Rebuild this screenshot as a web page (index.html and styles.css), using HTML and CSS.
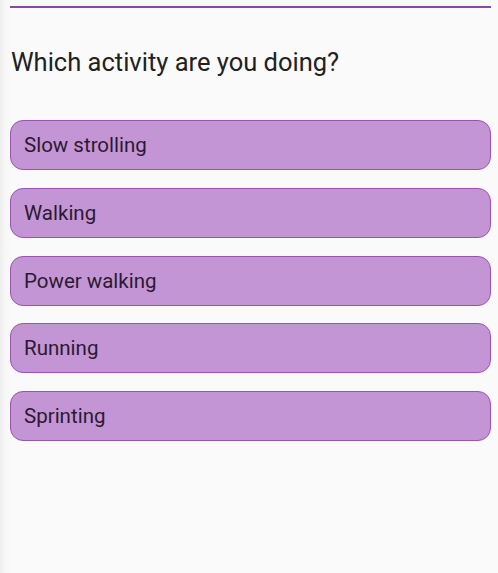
FILE: index.html
```html
<!DOCTYPE html>
<html lang="en">
<head>
    <meta charset="UTF-8">
    <meta name="viewport" content="width=device-width, initial-scale=1.0">
    <title>Activity</title>
    <link rel="stylesheet" href="styles.css">
</head>
<body>
    <div class="page">
        <div class="progress"></div>
        <h2 class="question">Which activity are you doing?</h2>
        <div class="options">
            <button class="option">Slow strolling</button>
            <button class="option">Walking</button>
            <button class="option">Power walking</button>
            <button class="option">Running</button>
            <button class="option">Sprinting</button>
        </div>
    </div>
</body>
</html>
```

FILE: styles.css
```css
html, body {
    margin: 0;
    height: 100%;
}

body {
    background: linear-gradient(to right, #efefef 0, #f7f7f7 6px, #fafafa 12px);
    font-family: Roboto, "Noto Sans", sans-serif;
    color: #222;
}

.page {
    padding: 6px 7px 0 10px;
}

.progress {
    height: 2px;
    background-color: #8e44ad;
}

.question {
    margin: 39px 0 0 1px;
    font-size: 25.5px;
    font-weight: 400;
    line-height: 30px;
    color: #212121;
}

.options {
    display: flex;
    flex-direction: column;
    gap: 17.75px;
    margin-top: 43px;
}

.option {
    height: 50px;
    padding: 0 13px;
    text-align: left;
    font-family: inherit;
    font-size: 20.5px;
    color: #2b1a31;
    background-color: #c495d4;
    border: 1px solid #9b52b3;
    border-radius: 13px;
}
```
